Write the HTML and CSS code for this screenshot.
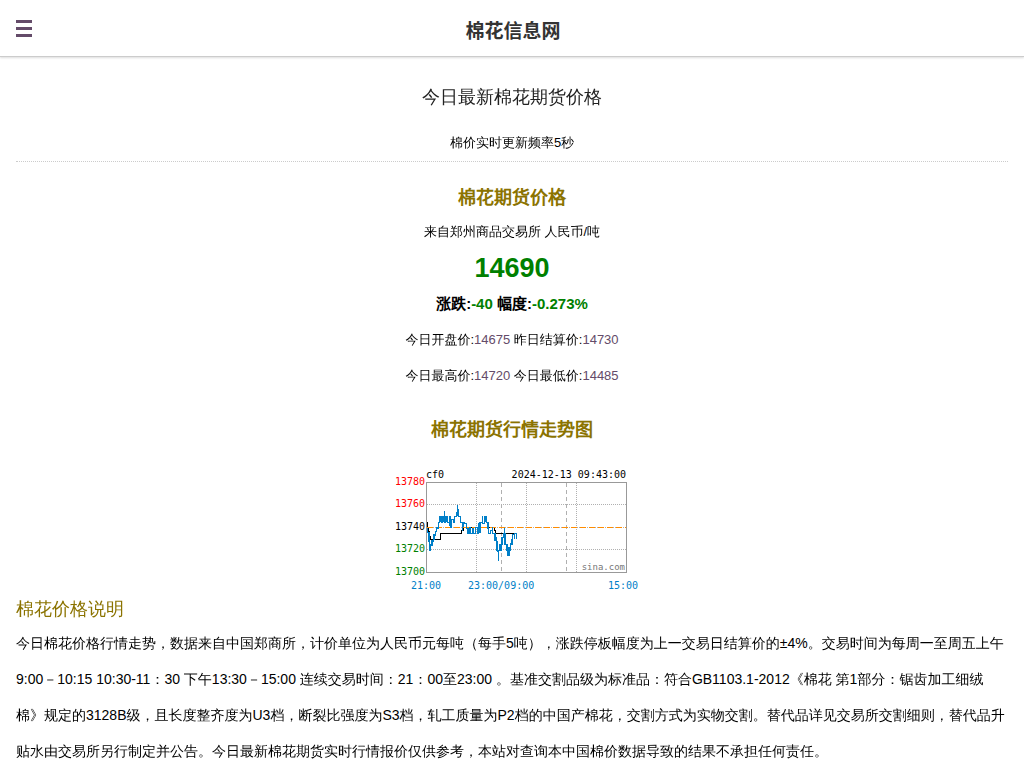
FILE: index.html
```html
<!DOCTYPE html>
<html lang="zh-CN">
<head>
<meta charset="utf-8">
<meta name="viewport" content="width=device-width, initial-scale=1">
<title>今日最新棉花期货价格</title>
<link rel="stylesheet" href="styles.css">
</head>
<body>
<header class="topbar">
  <button class="menu" type="button" aria-label="菜单"><span class="bar"></span><span class="bar"></span><span class="bar"></span></button>
  <a class="logo" href="#">棉花信息网</a>
</header>
<main class="content">
  <h1 class="title">今日最新棉花期货价格</h1>
  <p class="note">棉价实时更新频率5秒</p>
  <section class="quote">
    <h2 class="heading">棉花期货价格</h2>
    <p class="source">来自郑州商品交易所 人民币/吨</p>
    <p class="price">14690</p>
    <p class="change">涨跌:<span class="down">-40</span> 幅度:<span class="down">-0.273%</span></p>
    <p>今日开盘价:<span class="value">14675</span> 昨日结算价:<span class="value">14730</span></p>
    <p>今日最高价:<span class="value">14720</span> 今日最低价:<span class="value">14485</span></p>
  </section>
  <section class="trend">
    <h2 class="heading">棉花期货行情走势图</h2>
    <svg class="chart" width="250" height="130" viewBox="0 0 250 130" role="img" aria-label="棉花期货行情走势图">
      <g shape-rendering="crispEdges" fill="none">
        <path stroke="#b0b0b0" stroke-dasharray="1 1" d="M40 39.500H239M40 62.500H239M40 84.500H239M89.500 18V107M139.500 18V107M189.500 18V107"/>
        <path stroke="#b0b0b0" stroke-dasharray="4 3" d="M114.500 18V107M179.500 18V107"/>
        <rect x="39.500" y="17.500" width="200" height="90" stroke="#999"/>
        <path stroke="#000" d="M40.500 57V62H41.500V66H42.500V71H43.500V74.500H53.500V68.500H74.500V65.500H76.500V62.500H107.500V65.500H108.500V68.500H130"/>
        <path stroke="#ff8c00" stroke-dasharray="6 3" d="M40 62.500H239"/>
        <path stroke="#007fc8" d="M40.500 63V67H41.500V76H42.500V85V79H43.500V85V80H45.500V76H46.500V70H48.500V66H49.500V62H50.500V63H51.500V57H52.500V51H54.500V57H55.500V51H57.500V46V57H58.500V51H60.500V57H62.500V51H63.500V62H64.500V54H66.500V57H67.500V51H69.500V47H70.500V40V45H71.500V51H73.500V52V57H75.500V62V66V57H77.500V58H79.500V63H80.500V68H82.500V62H83.500V68H85.500V63H86.500V68H88.500V62H90.500V68H91.500V62H92.500V57V67H93.500V57H95.500V51V58H97.500V51H99.500V57H101.500V62V68H103.500V65H105.500V62V68H107.500V72H109.500V78H110.500V86H111.500V96V85H113.500V80V85H114.500V77H115.500V72H116.500V68H117.500V63V68V79H119.500V85H120.500V91V83H121.500V91V83H123.500V86V78H125.500V80V69H127.500V74V68H129.500V74"/>
        <path stroke="#007fc8" stroke-width="2" d="M42 67V76M43 79V86M45 75V81M47 69V75M53 52V57M56 51V57M59 52V57M63 52V61M71 44V51M76 57V62M81 63V68M92 58V67M99 51V57M101 57V64M108 68V76M110 76V86M113 79V85M115 72V80M118 68V79M120 79V86M122 82V91M125 74V80"/>
      </g>
      <g class="label">
        <text x="39" y="13">cf0</text>
        <text x="239" y="13" text-anchor="end">2024-12-13 09:43:00</text>
        <text class="high" x="38" y="20" text-anchor="end">13780</text>
        <text class="high" x="38" y="42" text-anchor="end">13760</text>
        <text x="38" y="65" text-anchor="end">13740</text>
        <text class="low" x="38" y="87" text-anchor="end">13720</text>
        <text class="low" x="38" y="110" text-anchor="end">13700</text>
        <text class="time" x="24" y="124">21:00</text>
        <text class="time" x="81" y="124">23:00/09:00</text>
        <text class="time" x="221" y="124">15:00</text>
        <text class="mark" x="238" y="105" text-anchor="end">sina.com</text>
      </g>
    </svg>
  </section>
  <section>
    <h2 class="heading-left">棉花价格说明</h2>
    <p class="text">今日棉花价格行情走势，数据来自中国郑商所，计价单位为人民币元每吨（每手5吨），涨跌停板幅度为上一交易日结算价的±4%。交易时间为每周一至周五上午9:00－10:15 10:30-11：30 下午13:30－15:00 连续交易时间：21：00至23:00 。基准交割品级为标准品：符合GB1103.1-2012《棉花 第1部分：锯齿加工细绒棉》规定的3128B级，且长度整齐度为U3档，断裂比强度为S3档，轧工质量为P2档的中国产棉花，交割方式为实物交割。替代品详见交易所交割细则，替代品升贴水由交易所另行制定并公告。今日最新棉花期货实时行情报价仅供参考，本站对查询本中国棉价数据导致的结果不承担任何责任。</p>
  </section>
</main>
</body>
</html>
```
FILE: styles.css
```css
* { box-sizing: border-box; }
body {
  margin: 0;
  background: #fff;
  color: #000;
  font: 13px/36px "Liberation Sans", "WenQuanYi Zen Hei", "Noto Sans CJK SC", sans-serif;
  text-spacing-trim: space-all;
}
h1, h2, p { margin: 0; }
.topbar {
  display: grid;
  grid-template-columns: 1fr auto 1fr;
  align-items: center;
  height: 57px;
  padding: 0 16px;
  border-bottom: 1px solid #ccc;
  box-shadow: 0 1px 2px #ddd;
}
.menu {
  display: grid;
  gap: 4px;
  width: 16px;
  padding: 0;
  border: 0;
  background: none;
  cursor: pointer;
}
.bar { height: 3px; background: #644b69; }
.logo {
  padding: 4px 0 0 2px;
  color: #333;
  font-family: "Noto Sans CJK SC", sans-serif;
  font-size: 19px;
  font-weight: bold;
  text-decoration: none;
}
.content { padding: 16px 16px 0; text-align: center; }
.title { color: #222; font-size: 18px; font-weight: normal; line-height: 48px; }
.note { padding-top: 4px; border-bottom: 1px dotted #ccc; }
.quote { padding-top: 18px; }
.trend { padding-top: 18px; }
.heading { color: #8b7300; font-size: 18px; line-height: 36px; }
.heading, .change { font-family: "Liberation Sans", sans-serif; }
.source { line-height: 32px; }
.price { padding-top: 2px; color: #008000; font-size: 27px; font-weight: bold; line-height: 36px; }
.change { font-size: 15px; font-weight: bold; }
.down { color: #008000; }
.value { color: #644b69; }
.chart { display: block; margin: 17px auto 0; overflow: visible; }
.label { font: 10px "DejaVu Sans Mono", monospace; }
.high { fill: #f00; }
.low { fill: #008000; }
.time { fill: #007fc8; }
.mark { font-size: 9px; fill: #777; }
.heading-left { color: #8b7300; font-size: 18px; font-weight: normal; line-height: 28px; text-align: left; }
.text { padding-top: 2px; font-size: 14px; text-align: left; }
```
